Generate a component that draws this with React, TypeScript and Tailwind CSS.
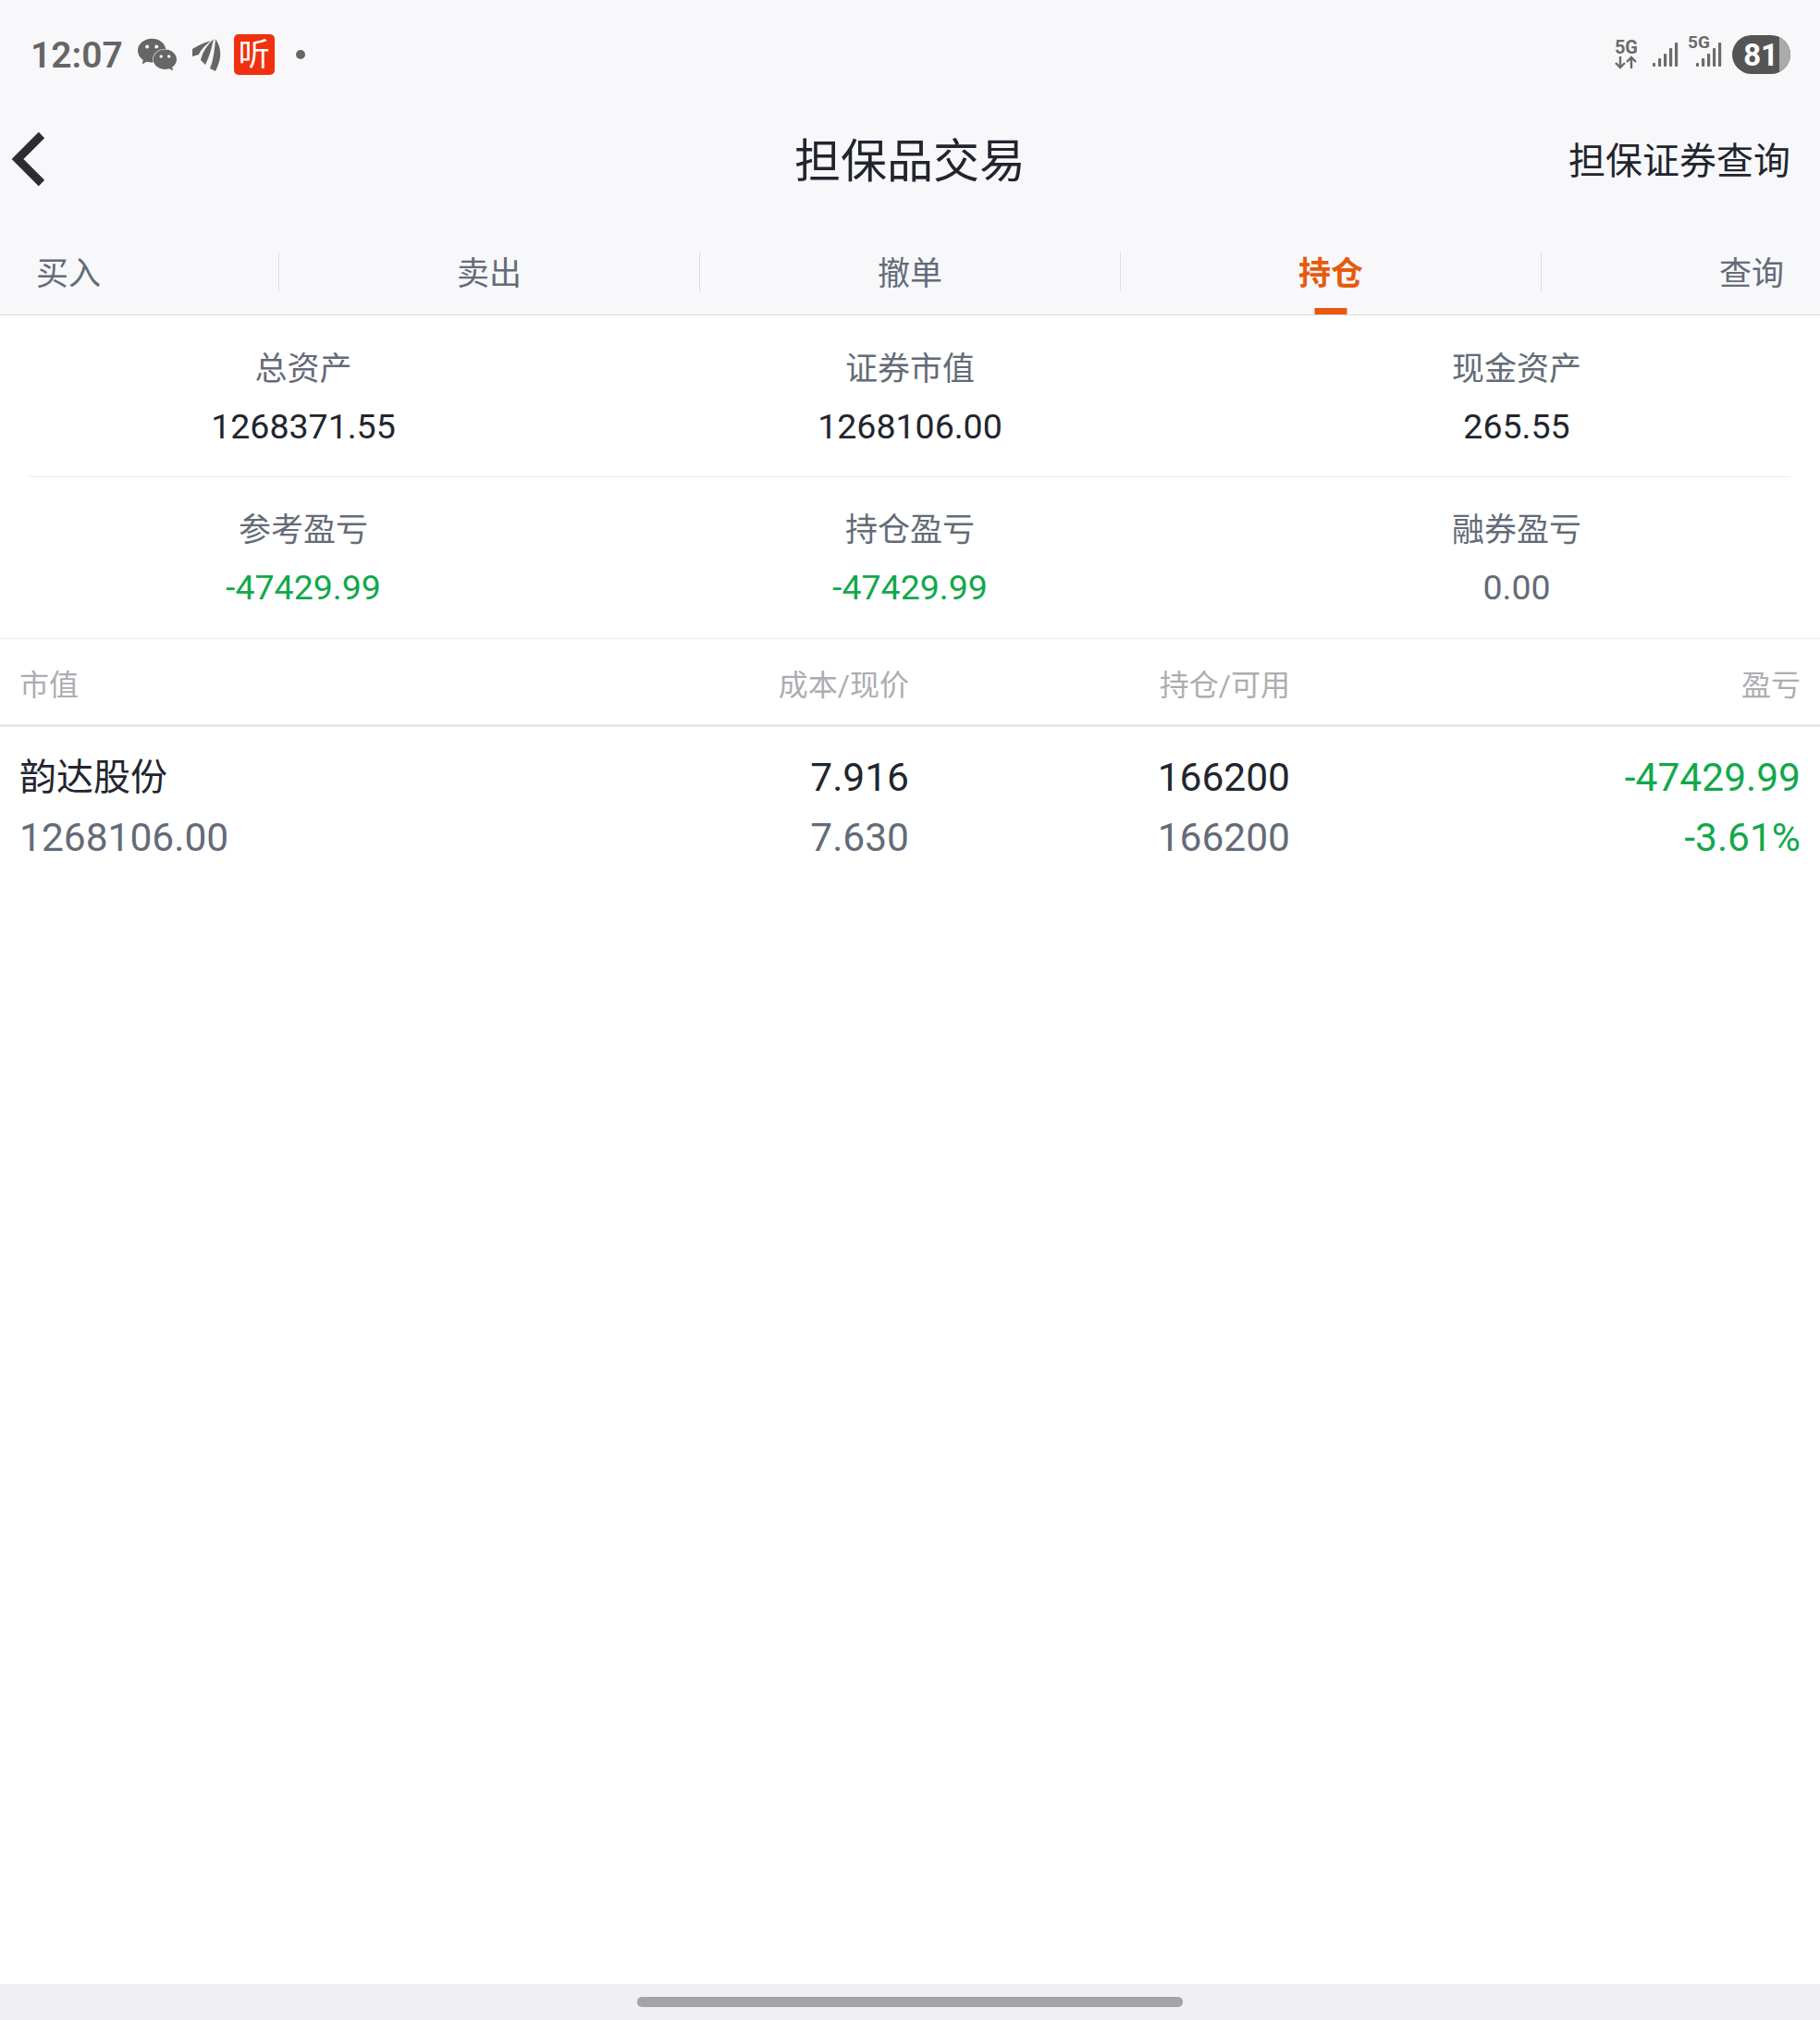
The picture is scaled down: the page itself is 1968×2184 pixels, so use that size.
import React from 'react';
import { SiWechat } from 'react-icons/si';

const CJK = "font-['Roboto','Noto_Sans_CJK_SC',sans-serif]";

type StatProps = { label: string; value: string; tone?: 'dark' | 'green' | 'gray' };

const tones = {
  dark: 'text-[#22252e]',
  green: 'text-[#12a84b]',
  gray: 'text-[#646b78]'
};

function Stat({ label, value, tone = 'dark' }: StatProps) {
  return (
    <div className="flex flex-col items-center">
      <div className="text-[35px] leading-[48px] text-[#646b78]">{label}</div>
      <div className={`mt-[13px] text-[37.5px] leading-[48px] ${tones[tone]}`}>{value}</div>
    </div>
  );
}

function Bars() {
  return (
    <svg width="28" height="28" viewBox="0 0 28 28" fill="#6b6b6b">
      <rect x="0" y="23" width="3" height="4" rx="1" />
      <rect x="6" y="18" width="3.2" height="9" rx="1" />
      <rect x="12" y="13" width="3.2" height="14" rx="1" />
      <rect x="18" y="7" width="3.2" height="20" rx="1" />
      <rect x="24" y="1" width="3.2" height="26" rx="1" />
    </svg>
  );
}

function Leaf() {
  return (
    <svg width="32" height="37" viewBox="0 0 32 37" fill="#666666">
      <path d="M1 12C7 8 14 5 21 3 14 9 10 13 8 18L1 20z" />
      <path d="M10 24C12 15 17 8 24 1 22 10 20 19 15 29z" />
      <path d="M20 33C24 24 25 12 26 1 32 10 34 20 26 36z" />
    </svg>
  );
}

function Arrows() {
  return (
    <svg width="24" height="15" viewBox="0 0 24 15" fill="none" stroke="#6b6b6b" strokeWidth="2.4">
      <path d="M6 1v12M1 8l5 5 5-5" />
      <path d="M18 14V2M13 7l5-5 5 5" />
    </svg>
  );
}

function Tab({ label, className, active }: { label: string; className: string; active?: boolean }) {
  return (
    <div className={`relative flex h-full items-start pt-[47px] ${className}`}>
      <span className={`text-[35px] leading-[48px] ${active ? 'font-semibold text-[#e8590c]' : 'text-[#646b78]'}`}>{label}</span>
      {active && <div className="absolute bottom-0 left-1/2 h-[7px] w-[35px] -translate-x-1/2 bg-[#e8590c]" />}
    </div>
  );
}

function Divider() {
  return <div className="mt-[47px] h-[42px] w-px shrink-0 bg-[#dcdde1]" />;
}

export default function App() {
  return (
    <div className={`flex h-[2184px] w-[1968px] flex-col bg-white ${CJK}`}>
      {/* status bar + nav */}
      <div className="bg-[#f8f8fb]">
        <div className="flex h-[118px] items-center justify-between pl-[33px] pr-[32px]">
          <div className="flex items-center">
            <span className="translate-y-[1px] text-[39px] font-semibold leading-none text-[#666666]">12:07</span>
            <SiWechat className="ml-[16px] text-[42px] text-[#666666]" />
            <div className="ml-[16px]"><Leaf /></div>
            <div className="ml-[14px] flex h-[44px] w-[44px] items-center justify-center rounded-[5px] bg-[#f0300f] text-[34px] leading-none text-white">听</div>
            <div className="ml-[23px] h-[10px] w-[10px] rounded-full bg-[#666666]" />
          </div>
          <div className="flex items-center">
            <div className="flex flex-col items-center">
              <span className="text-[20px] font-bold leading-[17px] text-[#6b6b6b]">5G</span>
              <Arrows />
            </div>
            <div className="ml-[16px]"><Bars /></div>
            <div className="relative ml-[19px]">
              <span className="absolute -left-[9px] -top-[9px] text-[19px] font-bold leading-none text-[#6b6b6b]">5G</span>
              <Bars />
            </div>
            <div className="ml-[11px] flex h-[42px] w-[63px] overflow-hidden rounded-full bg-[#555555]">
              <div className="flex w-[51px] items-center justify-end pr-[1px] text-[33px] font-bold leading-none text-white">81</div>
              <div className="flex-1 bg-[#aaaaaa]" />
            </div>
          </div>
        </div>

        <div className="relative flex h-[108px] items-center justify-end pr-[32px]">
          <svg className="absolute left-[12px] top-[24px]" width="38" height="60" viewBox="0 0 38 60" fill="none">
            <path d="M33 4 L7 30 L33 56" stroke="#2d2d2f" strokeWidth="9" />
          </svg>
          <div className="absolute inset-x-0 top-[21px] text-center text-[50px] leading-[72px] text-[#22252e]">担保品交易</div>
          <div className="relative top-[3px] text-[40px] leading-[56px] text-[#22252e]">担保证券查询</div>
        </div>

        <div className="flex h-[115px] border-b border-[#d9dade]">
          <Tab label="买入" className="w-[301px] pl-[39px]" />
          <Divider />
          <Tab label="卖出" className="flex-1 justify-center" />
          <Divider />
          <Tab label="撤单" className="flex-1 justify-center" />
          <Divider />
          <Tab label="持仓" className="flex-1 justify-center" active />
          <Divider />
          <Tab label="查询" className="w-[301px] justify-end pr-[39px]" />
        </div>
      </div>

      {/* asset summary */}
      <div className="grid grid-cols-3 pt-[35px] pb-[31px] border-b border-[#ececee]">
        <Stat label="总资产" value="1268371.55" />
        <Stat label="证券市值" value="1268106.00" />
        <Stat label="现金资产" value="265.55" />
        <div className="col-span-3 mx-[32px] mt-[30px] mb-[34px] h-px bg-[#ececee]" />
        <Stat label="参考盈亏" value="-47429.99" tone="green" />
        <Stat label="持仓盈亏" value="-47429.99" tone="green" />
        <Stat label="融券盈亏" value="0.00" tone="gray" />
      </div>

      {/* holdings table */}
      <div className="flex h-[95px] items-center border-b-[3px] border-[#e6e7ea] px-[21px] pt-[8px] text-[32px] text-[#adadb1]">
        <div className="flex-1">市值</div>
        <div className="w-[300px] text-right">成本/现价</div>
        <div className="w-[412px] text-right">持仓/可用</div>
        <div className="w-[552px] text-right">盈亏</div>
      </div>
      <div className="flex flex-1 items-start px-[21px] pt-[22px] text-[42.5px] leading-[65px]">
        <div className="flex-1">
          <div className="text-[40px] text-[#22252e]">韵达股份</div>
          <div className="text-[#646b78]">1268106.00</div>
        </div>
        <div className="w-[300px] text-right">
          <div className="text-[#22252e]">7.916</div>
          <div className="text-[#646b78]">7.630</div>
        </div>
        <div className="w-[412px] text-right">
          <div className="text-[#22252e]">166200</div>
          <div className="text-[#646b78]">166200</div>
        </div>
        <div className="w-[552px] text-right text-[#12a84b]">
          <div>-47429.99</div>
          <div>-3.61%</div>
        </div>
      </div>

      {/* gesture bar */}
      <div className="flex h-[39px] justify-center bg-[#f0f0f2] pt-[14px]">
        <div className="h-[11px] w-[590px] rounded-[5px] bg-[#a4a4a6]" />
      </div>
    </div>
  );
}
